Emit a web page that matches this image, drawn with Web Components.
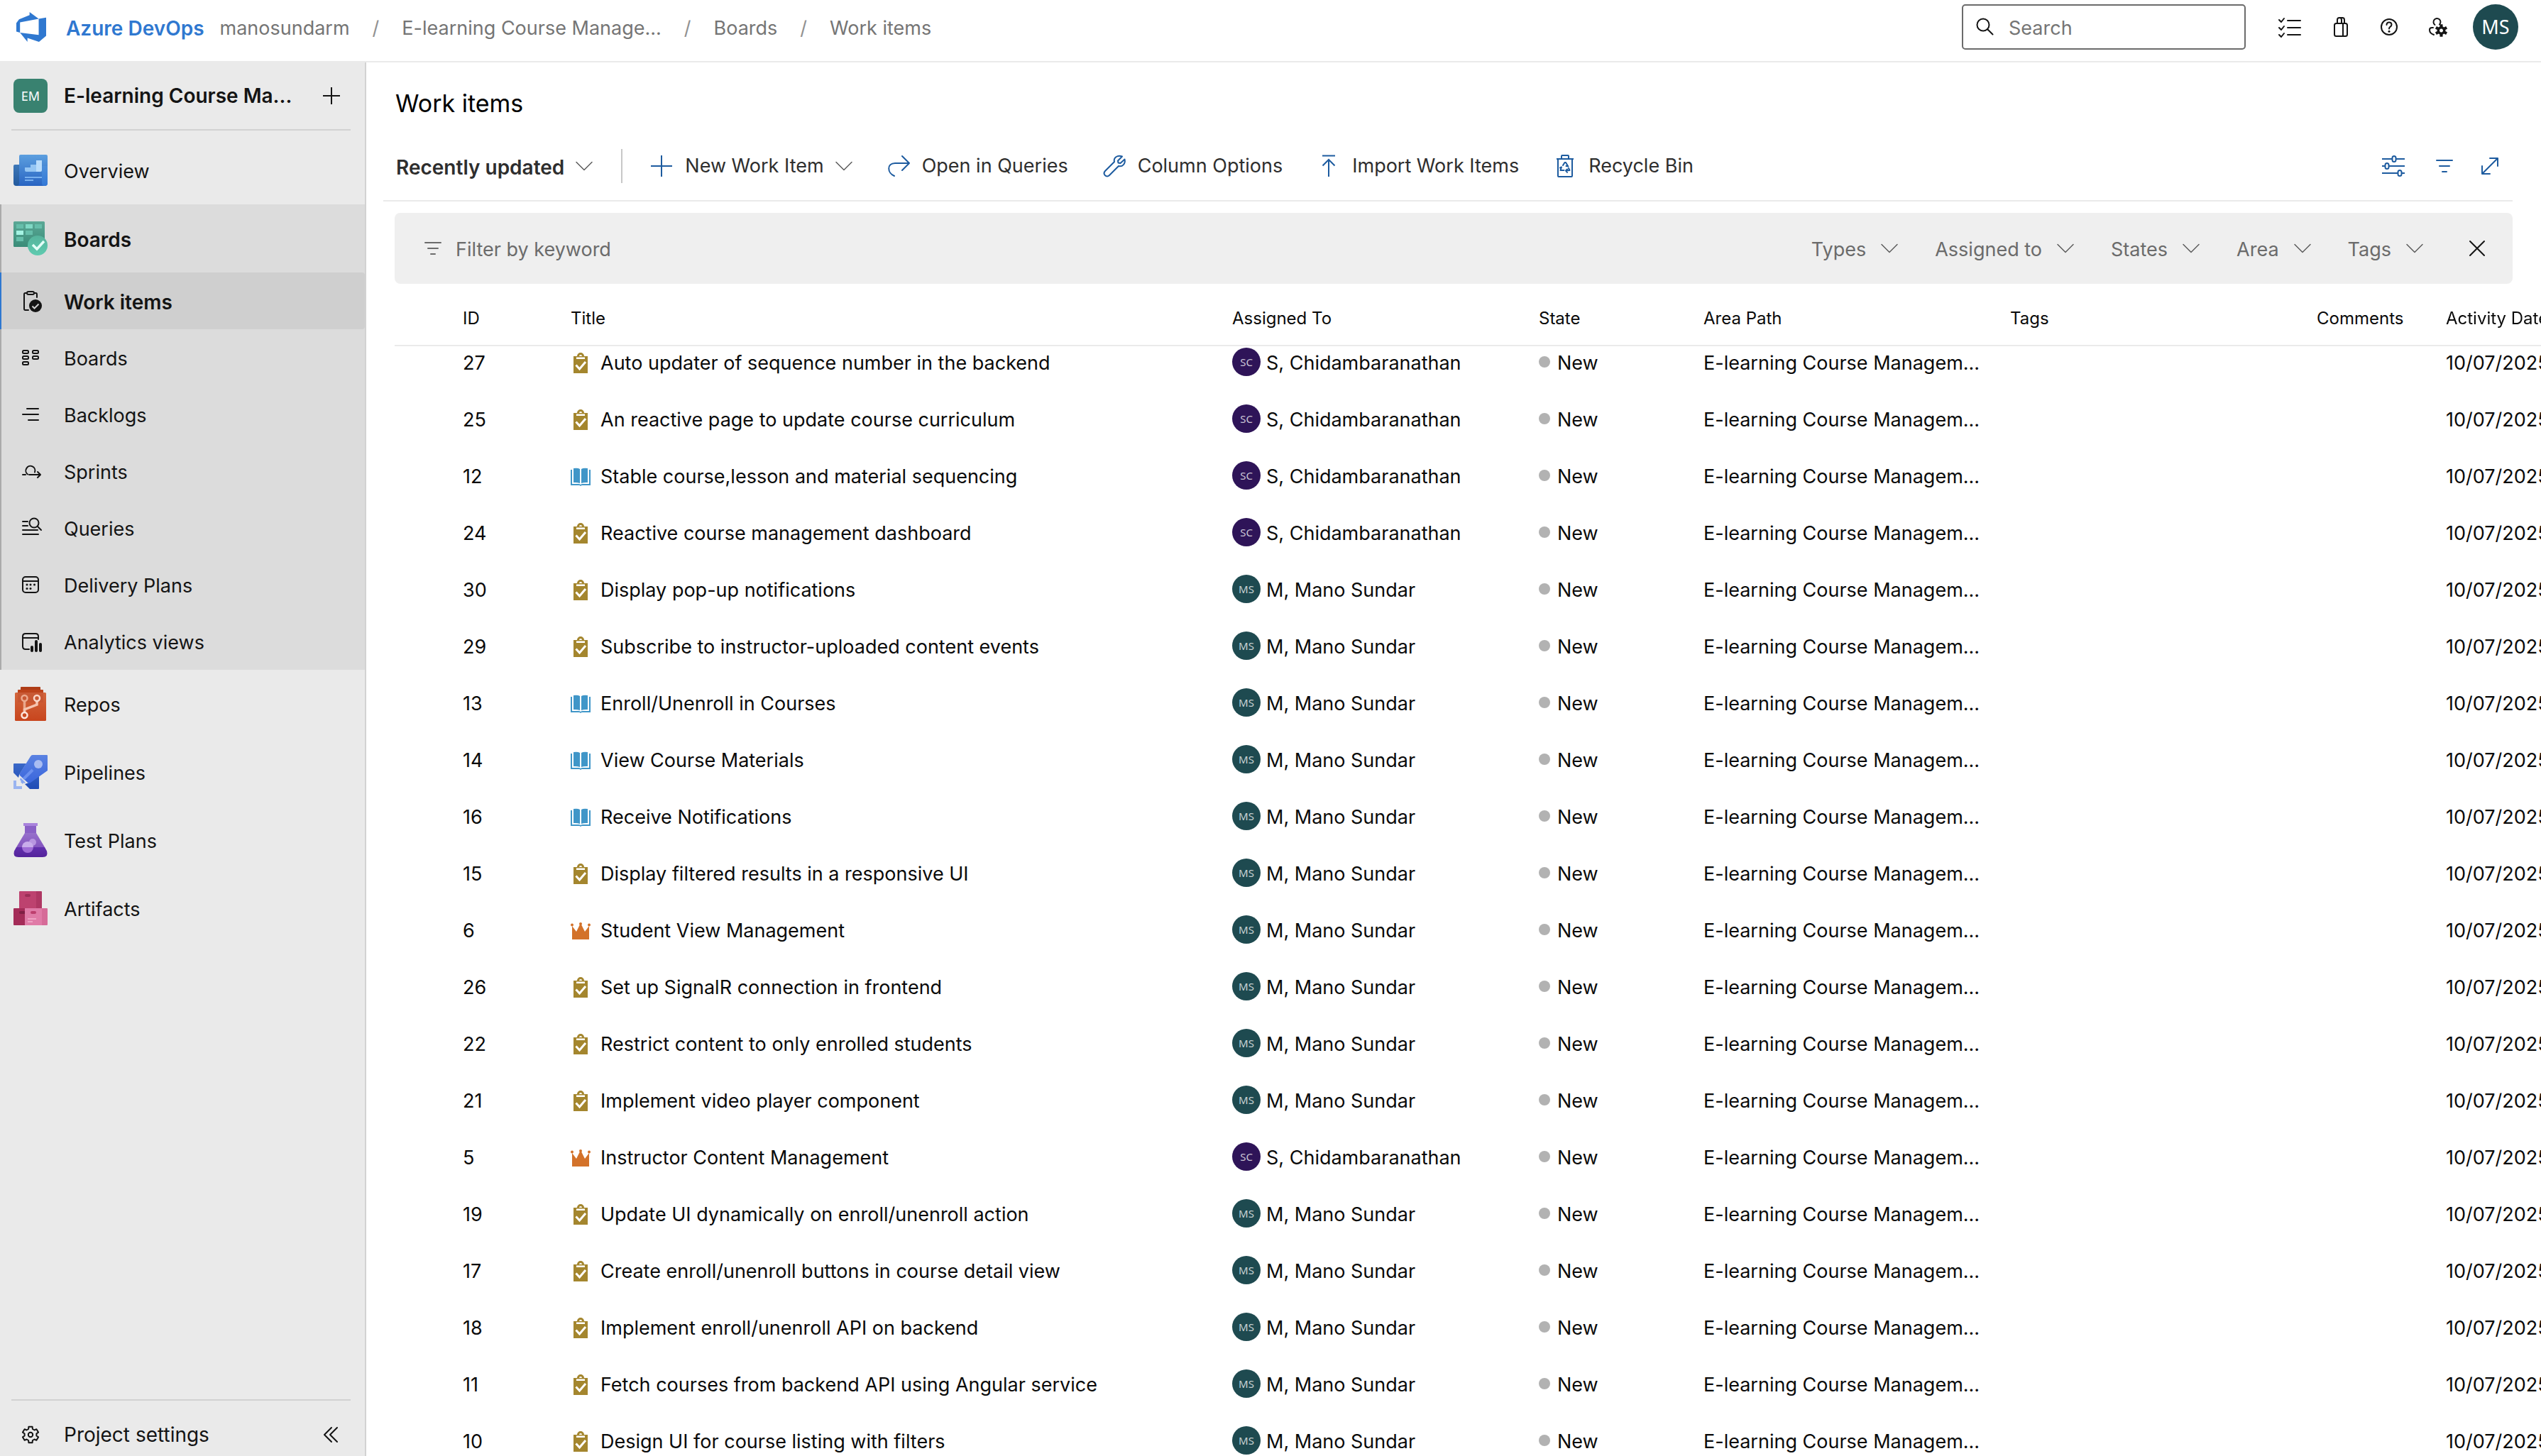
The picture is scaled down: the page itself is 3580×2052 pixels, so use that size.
<!DOCTYPE html>
<html lang="en">
<head>
<meta charset="utf-8">
<meta name="viewport" content="width=device-width, initial-scale=1">
<title>Work items - Boards</title>
<style>
  :root {
    --text: #141414;
    --muted: #757575;
    --line: #eaeaea;
    --blue: #1d5b9f;
    --brand: #2f78d0;
  }
  body {
    margin: 0;
    font: 27px/36px Inter, "Liberation Sans", sans-serif;
    color: var(--text);
    background: #fff;
  }
</style>
</head>
<body>
<app-shell>
  <top-bar slot="header">
    <crumb-link href="#org">manosundarm</crumb-link>
    <crumb-link href="#project" divided>E-learning Course Manage...</crumb-link>
    <crumb-link href="#boards" divided>Boards</crumb-link>
    <crumb-link href="#items" divided>Work items</crumb-link>
    <icon-button slot="actions" icon="tasks" label="Work"></icon-button>
    <icon-button slot="actions" icon="bag" label="Marketplace"></icon-button>
    <icon-button slot="actions" icon="help" label="Help"></icon-button>
    <icon-button slot="actions" icon="userSettings" label="User settings"></icon-button>
    <user-avatar slot="actions" size="large">MS</user-avatar>
  </top-bar>

  <side-nav slot="nav">
    <nav-item href="#overview" icon="overview">Overview</nav-item>
    <nav-group>
      <nav-item href="#boards" icon="boards" bold>Boards</nav-item>
      <nav-item href="#items" icon="workItems" sub bold selected>Work items</nav-item>
      <nav-item href="#board" icon="boardSmall" sub>Boards</nav-item>
      <nav-item href="#backlogs" icon="backlogs" sub>Backlogs</nav-item>
      <nav-item href="#sprints" icon="sprints" sub>Sprints</nav-item>
      <nav-item href="#queries" icon="queries" sub>Queries</nav-item>
      <nav-item href="#plans" icon="plans" sub>Delivery Plans</nav-item>
      <nav-item href="#analytics" icon="analytics" sub>Analytics views</nav-item>
    </nav-group>
    <nav-item href="#repos" icon="repos">Repos</nav-item>
    <nav-item href="#pipelines" icon="pipelines">Pipelines</nav-item>
    <nav-item href="#tests" icon="testPlans">Test Plans</nav-item>
    <nav-item href="#artifacts" icon="artifacts">Artifacts</nav-item>
  </side-nav>

  <page-toolbar>
    <picker-select bold label="View">Recently updated</picker-select>
    <tool-button slot="commands" icon="plus" menu>New Work Item</tool-button>
    <tool-button slot="commands" icon="share">Open in Queries</tool-button>
    <tool-button slot="commands" icon="wrench">Column Options</tool-button>
    <tool-button slot="commands" icon="upload">Import Work Items</tool-button>
    <tool-button slot="commands" icon="recycle">Recycle Bin</tool-button>
    <icon-button slot="far" icon="sliders" label="View options" blue></icon-button>
    <icon-button slot="far" icon="filter" label="Filter" blue></icon-button>
    <icon-button slot="far" icon="expand" label="Full screen" blue></icon-button>
  </page-toolbar>
  <filter-bar>
    <picker-select label="Types filter">Types</picker-select>
    <picker-select label="Assigned to filter">Assigned to</picker-select>
    <picker-select label="States filter">States</picker-select>
    <picker-select label="Area filter">Area</picker-select>
    <picker-select label="Tags filter">Tags</picker-select>
  </filter-bar>
  <work-items-table></work-items-table>
</app-shell>

<script>
/* Outline of a six-toothed gear centred on (cx, cy). */
function gear(cx, cy, outer, inner) {
  const pts = [];
  for (let k = 0; k < 6; k++) {
    for (const [off, r] of [[-20, inner], [-13, outer], [13, outer], [20, inner]]) {
      const a = (k * 60 - 90 + off) * Math.PI / 180;
      pts.push((cx + r * Math.cos(a)).toFixed(1) + ' ' + (cy + r * Math.sin(a)).toFixed(1));
    }
  }
  return 'M' + pts.join('L') + 'Z';
}
const stroke = (w, body) => `<g fill="none" stroke="currentColor" stroke-width="${w}" stroke-linecap="round" stroke-linejoin="round">${body}</g>`;
const grad = (id, a, b) => `<linearGradient id="${id}" x1="0" y1="0" x2="0" y2="1"><stop offset="0" stop-color="${a}"/><stop offset="1" stop-color="${b}"/></linearGradient>`;

/* name: [width, height, markup] */
const ICONS = {
  logo: [42, 42, `<g transform="scale(1.75)"><path fill="#2f78d0" d="M0 8.877L2.247 5.91l8.405-3.416V.022l7.37 5.393L2.966 8.338v8.225L0 15.707zm24-4.45v14.651l-5.753 4.9-9.303-3.057v3.056l-5.978-7.416 15.057 1.798V5.415z"/></g>`],
  search: [26, 26, stroke(2, '<circle cx="10" cy="10" r="8.500"/><path d="M16.500 16.500l7 7"/>')],
  tasks: [32, 32, stroke(2, '<path d="M1 6l3 3 4-5M1 17l3 3 4-5M1 27l3 3 4-5"/><path d="M13 7h18M13 17h18M13 27h18"/>')],
  bag: [32, 32, stroke(2, '<rect x="9" y="11" width="18" height="18" rx="2.500"/><path d="M21 11v18M13 11V6q0-3 3-3t3 3v5M16 3h4q3 0 3 3v5"/>')],
  help: [32, 32, stroke(2, '<circle cx="16" cy="16" r="11"/><path d="M12.500 13q0-3.500 3.500-3.500t3.500 3.300q0 1.700-1.800 2.900T16 18.500"/>') + '<circle cx="16" cy="22.300" r="1.500" fill="currentColor"/>'],
  userSettings: [32, 32, stroke(2, '<path d="M10.500 13a5 5 0 1 1 6.500-.5M8 17H6.500Q3 17 3 20q0 5 6 7"/>') + `<path fill="currentColor" fill-rule="evenodd" d="${gear(19.5, 21, 9, 6)}M19.500 18.500a2.500 2.500 0 1 0 .01 0Z"/>`],
  plus: [32, 32, stroke(2, '<path d="M15 1v30M0 16h30" stroke-linecap="butt"/>')],
  plusSmall: [24, 24, stroke(2, '<path d="M12 0v24M0 12h24" stroke-linecap="butt"/>')],
  share: [32, 32, stroke(2, '<path d="M9 30C-1 26-2 12 10 12h20M20 2l10 10-10 10"/>')],
  wrench: [32, 32, stroke(2, '<path d="M26 2.500l-6 6 .5 3 3 .5 6-5.500c1.500 6-3 11-8.500 9.500L8 29c-4 4-10-1.500-6-6L15 10C13.500 4.500 19 0 26 2.500z"/>')],
  upload: [32, 32, stroke(2, '<path d="M6 1.500h18M15 31V7M6.500 15.500L15 7l8.500 8.500" stroke-linecap="butt" stroke-linejoin="miter"/>')],
  recycle: [32, 32, stroke(2, '<path d="M3 6h24M5 6v24q0 1 1 1h18q1 0 1-1V6M10 6V2q0-1 1-1h8q1 0 1 1v4" stroke-linecap="butt"/><path d="M12 15l2.500-4h1.500l3 5M19.500 16.500l-3-.5M10 17.500L8.500 22h5M10 17.500l-2 1M20 19l1.500 3-5 .5M16 22.500l2-2M16 22.500l2 2.500"/>')],
  sliders: [32, 32, stroke(2, '<path d="M0 6h14M20 6h12M0 16h4M10 16h22M0 26h22M28 26h4" stroke-linecap="butt"/><rect x="14.500" y="2" width="5" height="8" rx="2.500"/><rect x="4.500" y="12" width="5" height="8" rx="2.500"/><rect x="22.500" y="22" width="5" height="8" rx="2.500"/>')],
  filter: [32, 32, stroke(2, '<path d="M9 8h22M13 16h14M17 24h6"/>')],
  filterLeft: [32, 32, stroke(2, '<path d="M5 8h22M9 16h14M13 24h6"/>')],
  expand: [32, 32, stroke(2, '<path d="M5 27L27 5M16 5h11v11M5 16v11h11"/>')],
  close: [32, 32, stroke(2, '<path d="M6 6l20 20M26 6L6 26"/>')],
  chevron: [24, 14, stroke(1.5, '<path d="M1 1.500l11 11 11-11"/>')],
  collapse: [24, 24, stroke(2, '<path d="M12 2L2 12l10 10M20 2L10 12l10 10"/>')],
  settings: [32, 32, stroke(2, `<path d="${gear(16, 16, 11.5, 8.5)}"/><circle cx="16" cy="16" r="3.200"/>`)],
  workItems: [32, 32, stroke(2, '<path d="M10 5H8.500Q7 5 7 7v20q0 2 1.500 2H13M22 5h1.500Q25 5 25 7v4"/><rect x="11" y="3" width="10" height="4" rx="2"/>') + '<circle cx="23" cy="23" r="9" fill="currentColor"/><path d="M18.500 23.500l3 3 6-6" fill="none" stroke="#cfcfcf" stroke-width="2"/>'],
  boardSmall: [32, 32, stroke(2, '<rect x="5" y="6" width="8" height="4" rx="1.500"/><rect x="5" y="14" width="8" height="4" rx="1.500"/><rect x="5" y="22" width="8" height="4" rx="1.500"/><rect x="19" y="6" width="8" height="4" rx="1.500"/><rect x="19" y="14" width="8" height="4" rx="1.500"/>')],
  backlogs: [32, 32, stroke(2, '<path d="M11 8h16M5 16h22M13 24h14"/>')],
  sprints: [32, 32, stroke(2, '<path d="M5 21h4M12 20.500a6.500 6.500 0 1 1 10-3M14 21h16M26 17l4 4-4 4"/>')],
  queries: [32, 32, stroke(2, '<path d="M5 7h7M5 13h7M5 19h21M5 25h22"/><circle cx="21" cy="9" r="6.500"/><path d="M26 14l5 5"/>')],
  plans: [32, 32, stroke(2, '<rect x="5" y="5" width="22" height="22" rx="4"/><path d="M5 11h22"/>') + '<g fill="currentColor"><circle cx="11" cy="16" r="1.500"/><circle cx="16" cy="16" r="1.500"/><circle cx="21.500" cy="16" r="1.500"/><circle cx="11" cy="21.500" r="1.500"/><circle cx="16" cy="21.500" r="1.500"/></g>'],
  analytics: [32, 32, stroke(2, '<path d="M14 27H9q-4 0-4-4V9q0-4 4-4h14q4 0 4 4v4M5 11h22"/>') + '<g fill="currentColor"><rect x="16" y="22" width="4" height="9" rx="2"/><rect x="22" y="14" width="4" height="17" rx="2"/><rect x="28" y="18" width="4" height="13" rx="2"/></g>'],
  overview: [48, 48, `<defs>${grad('a', '#5c9fdf', '#2864c2')}${grad('b', '#3d77b8', '#235a9d')}${grad('c', '#4d8fda', '#3378d6')}</defs><path fill="url(#b)" d="M2 16h6v30H4q-4 0-4-4V18q0-2 2-2z"/><path fill="url(#a)" d="M10 2h36q2 0 2 2v38q0 4-4 4H4q4 0 4-4V4q0-2 2-2z"/><path fill="url(#c)" d="M40 18h8v24q0 4-4 4t-4-4z"/><path fill="#94c5f3" d="M16 20h8v-4h8v10H18q-2 0-2-2z"/><path fill="#b9dcfb" d="M32 10h8v14q0 2-2 2h-6z"/><path fill="#78b0ee" d="M16 33h24v2H16zM16 37h12v2H16z"/>`],
  boards: [48, 48, `<defs>${grad('a', '#5ba896', '#3a8c78')}${grad('b', '#56b39c', '#5fcbb0')}</defs><rect width="44" height="36" rx="1.500" fill="url(#a)"/><path fill="#66beaa" d="M4 4h10v6H4zM30 4h10v6H30zM17 13h10v6H17zM4 22h10v6H4z"/><path fill="#7fd8c4" d="M17 4h10v6H17z"/><path fill="#a5f3e3" d="M4 13h10v6H4z"/><circle cx="34" cy="34" r="14" fill="url(#b)"/><path d="M27 33l6 6 10-11" fill="none" stroke="#e4fff8" stroke-width="3.500"/>`],
  repos: [48, 48, `<defs>${grad('a', '#d2663d', '#c8451d')}</defs><path fill="#ae3c16" d="M11 0h26q1 0 1 1v5H10V1q0-1 1-1z"/><path fill="#bd431b" d="M7 4h34q1 0 1 1v5H6V5q0-1 1-1z"/><rect x="2" y="8" width="44" height="40" rx="1.500" fill="url(#a)"/><path fill="#c05030" opacity=".5" d="M6 8h36v14H6z"/><g fill="none" stroke-width="3.500"><path stroke="#e9a78c" d="M15.500 20v14"/><path stroke="#f5c4b0" d="M33 20v5l-17.500 7v4"/></g><g fill="none" stroke-width="2.500"><circle cx="15.500" cy="16" r="4" stroke="#eca98e"/><circle cx="33" cy="16" r="4" stroke="#fbd9cb"/><circle cx="15.500" cy="40" r="4" stroke="#fde7de"/></g>`],
  pipelines: [48, 48, `<defs>${grad('a', '#5a82e2', '#3a66dc')}${grad('b', '#3a68c8', '#1f4cb6')}</defs><path fill="url(#b)" d="M1 12h17L8 28l-1 4-7-7V13q0-1 1-1zM36 29v18q0 1-1 1H23l-7-7 6-2z"/><path fill="url(#a)" d="M27 0h20q1 0 1 1v21L24 39q-2 1.500-4 0L9 29q-1-1 0-3L24 2q1-2 3-2z"/><path fill="#86a6f0" d="M10 32l7 7-2 1-1-1-1 2-3-3 1-1-2-2z"/><path d="M27 21L14 34" stroke="#6b90ee" stroke-width="4"/><circle cx="35" cy="13" r="6" fill="#a9bdf2"/><path fill="#9ab4f0" d="M0 36h4v8h8v4H0z"/>`],
  testPlans: [48, 48, `<defs>${grad('a', '#9670cb', '#8455bf')}${grad('b', '#6230ad', '#54239b')}</defs><path fill="#8a60c6" d="M16 3h16v12H16z"/><path fill="#a983dc" d="M14 0h20v4H14z"/><path fill="url(#a)" d="M16 14h16l12 20H4z"/><path fill="url(#b)" d="M4 34h40l3 5.500q2.500 8.500-6 8.500H7q-8.500 0-6-8.500z"/><circle cx="27" cy="27" r="5" fill="#b896e0"/><path fill="#c9adeb" d="M12 34a8 8 0 0 1 16 0z"/><path fill="#9f6cd6" d="M12 34a8 8 0 0 0 16 0z"/>`],
  artifacts: [48, 48, `<path fill="#bd426f" d="M9 0h23v24H8V1q0-1 1-1z"/><path fill="#ae3763" d="M32 0h7q1 0 1 1v23h-8z"/><rect x="16" y="4" width="8" height="4" rx="2" fill="#9b2f57"/><path fill="#a42c58" d="M1 24h15v24H1q-1 0-1-1V25q0-1 1-1z"/><path fill="#7f1f44" d="M10 28h6v4h-6q-2 0-2-2t2-2z"/><path fill="#e07ba7" d="M16 24h24v24H16z"/><path fill="#d66b98" d="M40 24h7q1 0 1 1v22q0 1-1 1h-7z"/><rect x="24" y="28" width="8" height="4" rx="2" fill="#bd3f6e"/><path fill="#efa2c4" d="M20 38h12v2H20zM20 42h7v2h-7z"/>`],
  task: [28, 32, `<path fill="#a4862e" fill-rule="evenodd" d="M4 8h5a5 5 0 0 1 10 0h5v24H4zM12 8h4a2 2 0 0 0-4 0z"/><path fill="#fff" d="M8 9.500h12V12H8z"/><path d="M7.500 20.500l5 5.500L21 16" fill="none" stroke="#fff" stroke-width="3"/>`],
  story: [28, 32, `<path fill="#4096c8" d="M4 6q6-1 9 1v20q-4-1.500-9-1zM24 6q-6-1-9 1v20q4-1.500 9-1z"/><path fill="#4096c8" d="M0 8h2v20h9q2 0 3 1 1-1 3-1h9V8h2v22H15.500L14 31l-1.500-1H0z"/>`],
  epic: [28, 32, `<path fill="#d3722a" d="M2 30V11l6 8 6-12 6 12 6-8v19z"/><g fill="#d3722a"><circle cx="2" cy="9.500" r="2"/><circle cx="14" cy="8" r="2"/><circle cx="26" cy="9.500" r="2"/></g>`]
};
const icon = name => {
  const [w, h, body] = ICONS[name];
  return `<svg width="${w}" height="${h}" viewBox="0 0 ${w} ${h}" aria-hidden="true">${body}</svg>`;
};

const RESET = `
  *, ::before, ::after { box-sizing: border-box; }
  svg { display: block; flex: none; overflow: visible; }
  button, select, input { font: inherit; color: inherit; background: none; border: 0; margin: 0; padding: 0; }
  a { color: inherit; text-decoration: none; }
  .t, select, input { padding-top: 3px; }
`;

class Base extends HTMLElement {
  connectedCallback() {
    if (this.shadowRoot) return;
    const root = this.attachShadow({ mode: 'open' });
    root.innerHTML = `<style>${RESET}${this.css()}</style>${this.view()}`;
    this.ready(root);
  }
  css() { return ''; }
  view() { return '<slot></slot>'; }
  ready() {}
}
const define = (name, cls) => customElements.define(name, cls);

define('user-avatar', class extends Base {
  css() {
    return `
      :host { display: flex; flex: none; align-items: center; justify-content: center; width: 40px; height: 40px;
        border-radius: 50%; background: #1e4a50; color: rgba(255,255,255,.75); font: 15px/20px "Noto Sans", sans-serif; }
      :host([tone=purple]) { background: #2e1458; }
      :host([size=large]) { width: 64px; height: 64px; font-size: 27px; color: #fff; }
      :host([tone=green]) { width: 48px; height: 48px; border-radius: 8px; background: #398270; color: #fff; font-size: 18px; }`;
  }
});

define('icon-button', class extends Base {
  css() { return `:host { display: block; flex: none; color: #141414; } :host([blue]) { color: var(--blue); } button { display: block; }`; }
  view() { return `<button type="button" aria-label="${this.getAttribute('label')}">${icon(this.getAttribute('icon'))}</button>`; }
});

define('crumb-link', class extends Base {
  css() { return `:host { display: flex; gap: 32px; white-space: nowrap; color: var(--muted); } span { color: #919191; }`; }
  view() { return `${this.hasAttribute('divided') ? '<span class="t">/</span>' : ''}<a class="t" href="${this.getAttribute('href')}"><slot></slot></a>`; }
});

define('top-bar', class extends Base {
  css() {
    return `
      :host { display: flex; align-items: center; height: 88px; padding: 0 32px 10px 23px; border-bottom: 2px solid var(--line); }
      .brand { display: flex; align-items: center; gap: 28px; margin-right: 22px; font-size: 28px; font-weight: 600; color: var(--brand); white-space: nowrap; }
      nav { display: flex; gap: 32px; }
      label { display: flex; align-items: center; gap: 20px; width: 400px; height: 64px; margin: 0 46px 0 auto; padding: 0 18px;
        border: 2px solid #6b6b6b; border-radius: 5px; }
      input { flex: 1; min-width: 0; outline: 0; }
      input::placeholder { color: var(--muted); opacity: 1; }
      .actions { display: flex; align-items: center; gap: 38px; }
      ::slotted(user-avatar) { margin-left: -6px; }`;
  }
  view() {
    return `<a class="brand" href="#home">${icon('logo')}<span class="t">Azure DevOps</span></a>
      <nav aria-label="Breadcrumb"><slot></slot></nav>
      <label>${icon('search')}<input type="text" placeholder="Search" aria-label="Search"></label>
      <div class="actions"><slot name="actions"></slot></div>`;
  }
});

define('nav-item', class extends Base {
  css() {
    return `
      :host { display: block; }
      a { display: flex; align-items: center; gap: 23px; height: 96px; padding-left: var(--nav-inset, 19px); white-space: nowrap; }
      .icon { display: flex; flex: none; justify-content: center; width: 48px; }
      :host([sub]) a { height: 80px; }
      :host([bold]) a { font-size: 28px; font-weight: 600; }
      :host([selected]) a { background: #cfcfcf; border-radius: 0 4px 4px 0; }
      :host([selected]) { margin-left: -2px; border-left: 2px solid var(--brand); }`;
  }
  view() { return `<a href="${this.getAttribute('href')}"><span class="icon">${icon(this.getAttribute('icon'))}</span><span class="t"><slot></slot></span></a>`; }
});

define('nav-group', class extends Base {
  css() { return `:host { display: block; --nav-inset: 17px; background: #dcdcdc; border-left: 2px solid #ababab; }`; }
});

define('side-nav', class extends Base {
  css() {
    return `
      :host { display: flex; flex-direction: column; background: #eaeaea; border-right: 2px solid #d2d2d2; }
      .project { display: flex; align-items: center; height: 94px; padding: 0 35px 0 19px; font-size: 28px; font-weight: 600; white-space: nowrap; }
      .project a { display: flex; align-items: center; gap: 23px; flex: 1; }
      .project button, .foot button { display: block; }
      hr { width: auto; height: 2px; margin: 0 20px 0 16px; border: 0; background: #d2d2d2; }
      nav { flex: 1; padding-top: 8px; }
      .foot { display: flex; align-items: center; height: 78px; padding: 18px 35px 0 27px; font-size: 28px; }
      .foot a { display: flex; flex: 1; align-items: center; gap: 31px; }`;
  }
  view() {
    return `<div class="project"><a href="#project"><user-avatar tone="green">EM</user-avatar><span>E-learning Course Ma...</span></a>
      <button type="button" aria-label="Add">${icon('plusSmall')}</button></div><hr>
      <nav aria-label="Project"><slot></slot></nav><hr>
      <div class="foot"><a href="#settings">${icon('settings')}<span>Project settings</span></a>
      <button type="button" aria-label="Collapse navigation">${icon('collapse')}</button></div>`;
  }
});

define('picker-select', class extends Base {
  css() {
    return `
      :host { display: block; color: #6b6b6b; }
      :host([bold]) { font-size: 28px; font-weight: 600; color: #2e2e2e; }
      label { display: flex; align-items: center; gap: 21px; }
      :host([bold]) label { gap: 16px; }
      svg { color: #5c5c5c; }
      select { appearance: none; field-sizing: content; height: 48px; outline: 0; }`;
  }
  view() {
    return `<label><select aria-label="${this.getAttribute('label')}"><option>${this.textContent.trim()}</option></select>${icon('chevron')}</label>`;
  }
});

define('tool-button', class extends Base {
  css() {
    return `
      :host { display: block; }
      button { display: flex; align-items: center; gap: 16px; white-space: nowrap; color: #2e2e2e; }
      .lead { color: var(--blue); }
      .menu { color: #5c5c5c; }`;
  }
  view() {
    return `<button type="button"><span class="lead">${icon(this.getAttribute('icon'))}</span><span><slot></slot></span>${this.hasAttribute('menu') ? `<span class="menu">${icon('chevron')}</span>` : ''}</button>`;
  }
});

define('page-toolbar', class extends Base {
  css() {
    return `
      :host { display: block; margin: 0 40px 0 24px; border-bottom: 2px solid var(--line); }
      h1 { margin: 0; padding: 36px 0 18px 17px; font-size: 34px; line-height: 44px; font-weight: 400; color: #000; }
      .row { display: flex; align-items: center; height: 96px; padding: 0 16px 0 18px; }
      .rule { width: 2px; height: 48px; margin: 0 40px; background: #c8c8c8; }
      .commands { display: flex; flex: 1; gap: 50px; }
      .far { display: flex; gap: 36px; }`;
  }
  view() {
    return `<h1>Work items</h1><div class="row" role="toolbar"><slot></slot><span class="rule"></span>
      <div class="commands"><slot name="commands"></slot></div><div class="far"><slot name="far"></slot></div></div>`;
  }
});

define('filter-bar', class extends Base {
  css() {
    return `
      :host { display: flex; align-items: center; height: 100px; margin: 16px 40px 0; padding: 0 34px 0 38px; border-radius: 8px; background: #efefef; }
      label { display: flex; flex: 1; align-items: center; gap: 16px; color: #6b6b6b; }
      input { flex: 1; outline: 0; }
      input::placeholder { color: #6b6b6b; opacity: 1; }
      .pickers { display: flex; gap: 52px; margin-right: 60px; }
      button { display: block; }`;
  }
  view() {
    return `<label>${icon('filterLeft')}<input type="text" placeholder="Filter by keyword" aria-label="Filter by keyword"></label>
      <div class="pickers"><slot></slot></div><button type="button" aria-label="Close filter">${icon('close')}</button>`;
  }
});

const SC = ['purple', 'SC', 'S, Chidambaranathan'];
const MS = ['teal', 'MS', 'M, Mano Sundar'];
const ITEMS = [
  [27, 'task', 'Auto updater of sequence number in the backend', SC],
  [25, 'task', 'An reactive page to update course curriculum', SC],
  [12, 'story', 'Stable course,lesson and material sequencing', SC],
  [24, 'task', 'Reactive course management dashboard', SC],
  [30, 'task', 'Display pop-up notifications', MS],
  [29, 'task', 'Subscribe to instructor-uploaded content events', MS],
  [13, 'story', 'Enroll/Unenroll in Courses', MS],
  [14, 'story', 'View Course Materials', MS],
  [16, 'story', 'Receive Notifications', MS],
  [15, 'task', 'Display filtered results in a responsive UI', MS],
  [6, 'epic', 'Student View Management', MS],
  [26, 'task', 'Set up SignalR connection in frontend', MS],
  [22, 'task', 'Restrict content to only enrolled students', MS],
  [21, 'task', 'Implement video player component', MS],
  [5, 'epic', 'Instructor Content Management', SC],
  [19, 'task', 'Update UI dynamically on enroll/unenroll action', MS],
  [17, 'task', 'Create enroll/unenroll buttons in course detail view', MS],
  [18, 'task', 'Implement enroll/unenroll API on backend', MS],
  [11, 'task', 'Fetch courses from backend API using Angular service', MS],
  [10, 'task', 'Design UI for course listing with filters', MS]
];

define('work-items-table', class extends Base {
  css() {
    return `
      :host { display: block; flex: 1; min-height: 0; margin-left: 40px; overflow: hidden; color: #0a0a0a; }
      table { width: 100%; table-layout: fixed; border-collapse: separate; border-spacing: 0; }
      th, td { padding: 0 0 0 16px; text-align: left; font-weight: 400; white-space: nowrap; }
      th { position: sticky; top: 0; z-index: 1; height: 88px; padding-top: 11px; background: #fff; border-bottom: 2px solid var(--line); font-size: 24px; line-height: 32px; }
      td { height: 80px; }
      td.t { padding-top: 3px; }
      .cell { display: flex; align-items: center; }
      .title { gap: 14px; }
      .who { gap: 8px; }
      .state { gap: 10px; }
      .dot { width: 16px; height: 16px; border-radius: 50%; background: #b2b2b2; }
      .gutter { width: 80px; } .id { width: 152px; } .name { width: 932px; } .user { width: 432px; }
      .st { width: 232px; } .wide { width: 432px; } .comments { width: 182px; }`;
  }
  view() {
    const rows = ITEMS.map(([id, type, title, who]) => `<tr><td></td><td class="t">${id}</td>
      <td><a class="cell title" href="#item-${id}">${icon(type)}<span class="t">${title}</span></a></td>
      <td><div class="cell who"><user-avatar tone="${who[0]}">${who[1]}</user-avatar><span class="t">${who[2]}</span></div></td>
      <td><div class="cell state"><span class="dot"></span><span class="t">New</span></div></td>
      <td class="t">E-learning Course Managem...</td><td></td><td></td><td class="t">10/07/2025</td></tr>`).join('');
    return `<table><colgroup><col class="gutter"><col class="id"><col class="name"><col class="user"><col class="st"><col class="wide"><col class="wide"><col class="comments"><col></colgroup>
      <thead><tr><th></th><th scope="col">ID</th><th scope="col">Title</th><th scope="col">Assigned To</th><th scope="col">State</th><th scope="col">Area Path</th><th scope="col">Tags</th><th scope="col">Comments</th><th scope="col">Activity Date</th></tr></thead>
      <tbody>${rows}</tbody></table>`;
  }
  ready() { this.scrollTop = 18; }
});

define('app-shell', class extends Base {
  css() {
    return `
      :host { display: flex; flex-direction: column; height: 100vh; overflow: hidden; }
      .body { display: flex; flex: 1; min-height: 0; }
      ::slotted(side-nav) { flex: 0 0 516px; box-sizing: border-box; }
      ::slotted(top-bar) { flex: none; box-sizing: border-box; }
      main { display: flex; flex: 1; flex-direction: column; min-width: 0; }`;
  }
  view() { return `<slot name="header"></slot><div class="body"><slot name="nav"></slot><main><slot></slot></main></div>`; }
  ready() { requestAnimationFrame(() => { this.querySelector('work-items-table').scrollTop = 18; }); }
});
</script>
</body>
</html>
